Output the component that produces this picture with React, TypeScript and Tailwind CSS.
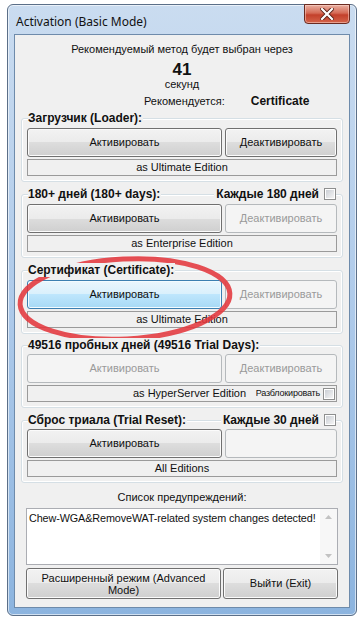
import React from "react";

type BtnKind = "normal" | "disabled" | "hot";

const btnStyles: Record<BtnKind, string> = {
  normal:
    "border-[#707070] bg-[linear-gradient(#f2f2f2,#ebebeb_50%,#dddddd_50%,#cfcfcf)] text-[#111] shadow-[inset_0_0_0_1px_#fbfbfb]",
  disabled: "border-[#b5b9bc] bg-[#f4f4f4] text-[#9a9a9a]",
  hot:
    "border-[#3c7fb1] bg-[linear-gradient(#eaf6fd,#d9f0fc_50%,#bee6fd_50%,#a7d9f5)] text-[#111] shadow-[inset_0_0_0_1px_#f3fbff]",
};

const Btn: React.FC<{ kind?: BtnKind; className?: string; children?: React.ReactNode }> = ({
  kind = "normal",
  className = "",
  children,
}) => (
  <div
    className={`flex items-center justify-center rounded-[3px] border text-[11px] ${btnStyles[kind]} ${className}`}
  >
    {children}
  </div>
);

const Check: React.FC = () => (
  <span className="inline-block h-[12px] w-[12px] shrink-0 border border-[#8e8f8f] bg-white p-[1px]">
    <span className="block h-full w-full bg-[linear-gradient(135deg,#cbcfd5,#f4f4f4)]" />
  </span>
);

interface GroupProps {
  title: string;
  right?: React.ReactNode;
  left: BtnKind;
  rightBtn: BtnKind;
  rightLabel?: string;
  bar: React.ReactNode;
  tight?: boolean;
}

const Group: React.FC<GroupProps> = ({ title, right, left, rightBtn, rightLabel = "Деактивировать", bar, tight }) => (
  <div className="mx-[6px]">
    <div className="relative z-10 flex h-[14px] items-center justify-between pl-[7px] pr-[7px] text-[12px] font-bold leading-[14px] text-[#111]">
      <span className="bg-[#f0f0f0] pr-[1px]">{title}</span>
      {right && <span className="flex items-center gap-[5px] bg-[#f0f0f0] pl-[2px]">{right}</span>}
    </div>
    <div
      className={`-mt-[7px] rounded-[3px] border border-[#d5dfe5] px-[5px] pb-[5px] shadow-[inset_0_0_0_1px_#fff] ${
        tight ? "pt-[8px]" : "pt-[9px]"
      }`}
    >
      <div className="flex gap-[3px]">
        <Btn kind={left} className="h-[29px] w-[195px]">
          Активировать
        </Btn>
        <Btn kind={rightBtn} className="h-[29px] flex-1">
          {rightLabel}
        </Btn>
      </div>
      <div className="mt-[2px] flex h-[17px] items-center border border-[#9a9a9a] text-[11px] text-[#111]">
        {bar}
      </div>
    </div>
  </div>
);

export default function App() {
  return (
    <div className="relative h-[623px] w-[364px] overflow-hidden bg-white font-['Liberation_Sans',Arial,sans-serif]">
      <div className="ml-[7px] mt-[4px] flex h-[612px] w-[350px] flex-col rounded-[6px] border border-[#5b6f88] bg-linear-to-b from-[#cadcf0] via-[#aecaea] to-[#8cb4df] shadow-[inset_0_0_0_1px_rgba(255,255,255,0.6)]">
        {/* title bar */}
        <div className="relative flex h-[29px] shrink-0 items-center pl-[8px]">
          <span className="pt-[4px] font-['Noto_Sans',sans-serif] text-[12px] text-[#111]">
            Activation (Basic Mode)
          </span>
          <div className="absolute -top-px right-[6px] flex h-[20px] w-[46px] items-center justify-center rounded-b-[4px] border border-[#6a2a20] bg-[linear-gradient(#eab0a2,#d56a55_45%,#c3402b_55%,#d4644a)] shadow-[inset_0_0_0_1px_rgba(255,220,210,0.5)]">
            <svg width="14" height="12" viewBox="0 0 14 12">
              <path d="M2 1 L12 11 M12 1 L2 11" stroke="#5a2218" strokeWidth="4" strokeLinecap="square" />
              <path d="M2 1 L12 11 M12 1 L2 11" stroke="#ffffff" strokeWidth="2.2" strokeLinecap="square" />
            </svg>
          </div>
        </div>

        {/* client */}
        <div className="mx-[6px] flex h-[574px] flex-col border border-[#6e8bab] bg-[#f0f0f0] text-[11px] text-[#111]">
          <div className="mt-[7px] h-[14px] text-center leading-[14px]">Рекомендуемый метод будет выбран через</div>
          <div className="mt-[5px] h-[17px] text-center text-[17px] font-bold leading-[17px]">41</div>
          <div className="h-[13px] text-center leading-[13px]">секунд</div>
          <div className="mt-[3px] flex h-[14px] items-center leading-[14px]">
            <span className="ml-[129px]">Рекомендуется:</span>
            <span className="ml-[26px] text-[12px] font-bold">Certificate</span>
          </div>

          <div className="mt-[3px]" />
          <Group
            title="Загрузчик (Loader):"
            left="normal"
            rightBtn="normal"
            bar={<span className="w-full text-center">as Ultimate Edition</span>}
          />
          <div className="mt-[5px]" />
          <Group
            title="180+ дней (180+ days):"
            right={
              <>
                <span>Каждые 180 дней</span>
                <Check />
              </>
            }
            left="normal"
            rightBtn="disabled"
            bar={<span className="w-full text-center">as Enterprise Edition</span>}
          />
          <div className="mt-[5px]" />
          <Group
            title="Сертификат (Certificate):"
            left="hot"
            rightBtn="disabled"
            bar={<span className="w-full text-center">as Ultimate Edition</span>}
          />
          <div className="mt-[4px]" />
          <Group
            title="49516 пробных дней (49516 Trial Days):"
            left="disabled"
            rightBtn="disabled"
            tight
            bar={
              <div className="flex w-full items-center">
                <span className="pl-[105px]">as HyperServer Edition</span>
                <span className="ml-auto mr-[3px] text-[9px] tracking-[-0.2px]">Разблокировать</span>
                <span className="mr-px flex">
                  <Check />
                </span>
              </div>
            }
          />
          <div className="mt-[5px]" />
          <Group
            title="Сброс триала (Trial Reset):"
            right={
              <>
                <span>Каждые 30 дней</span>
                <Check />
              </>
            }
            left="normal"
            rightBtn="disabled"
            rightLabel=""
            tight
            bar={<span className="w-full text-center">All Editions</span>}
          />

          <div className="mt-[7px] h-[14px] text-center leading-[14px]">Список предупреждений:</div>
          <div className="mx-[11px] mt-[4px] flex h-[57px] border border-[#abadb3] bg-white">
            <div className="flex-1 overflow-hidden whitespace-nowrap pl-[2px] pt-[2px] text-[10.8px] leading-[14px] tracking-[-0.1px]">
              Chew-WGA&amp;RemoveWAT-related system changes detected!
            </div>
            <div className="flex w-[17px] shrink-0 flex-col items-center justify-between bg-[#f7f7f7] py-[6px]">
              <svg width="7" height="4" viewBox="0 0 7 4">
                <path d="M0 4 L3.5 0 L7 4 Z" fill="#c2c2c2" />
              </svg>
              <svg width="7" height="4" viewBox="0 0 7 4">
                <path d="M0 0 L3.5 4 L7 0 Z" fill="#c2c2c2" />
              </svg>
            </div>
          </div>
          <div className="mx-[11px] mt-[3px] flex gap-[2px]">
            <Btn className="h-[31px] w-[195px] px-[10px] text-center leading-[12px]">
              Расширенный режим (Advanced Mode)
            </Btn>
            <Btn className="h-[31px] flex-1">Выйти (Exit)</Btn>
          </div>
        </div>
      </div>

      {/* red annotation ellipse */}
      <svg className="pointer-events-none absolute left-0 top-0" width="364" height="623">
        <ellipse
          cx="125"
          cy="299"
          rx="105"
          ry="40"
          transform="rotate(-3 125 299)"
          fill="none"
          stroke="#e3373c"
          strokeWidth="5"
          opacity="0.88"
        />
      </svg>
    </div>
  );
}
